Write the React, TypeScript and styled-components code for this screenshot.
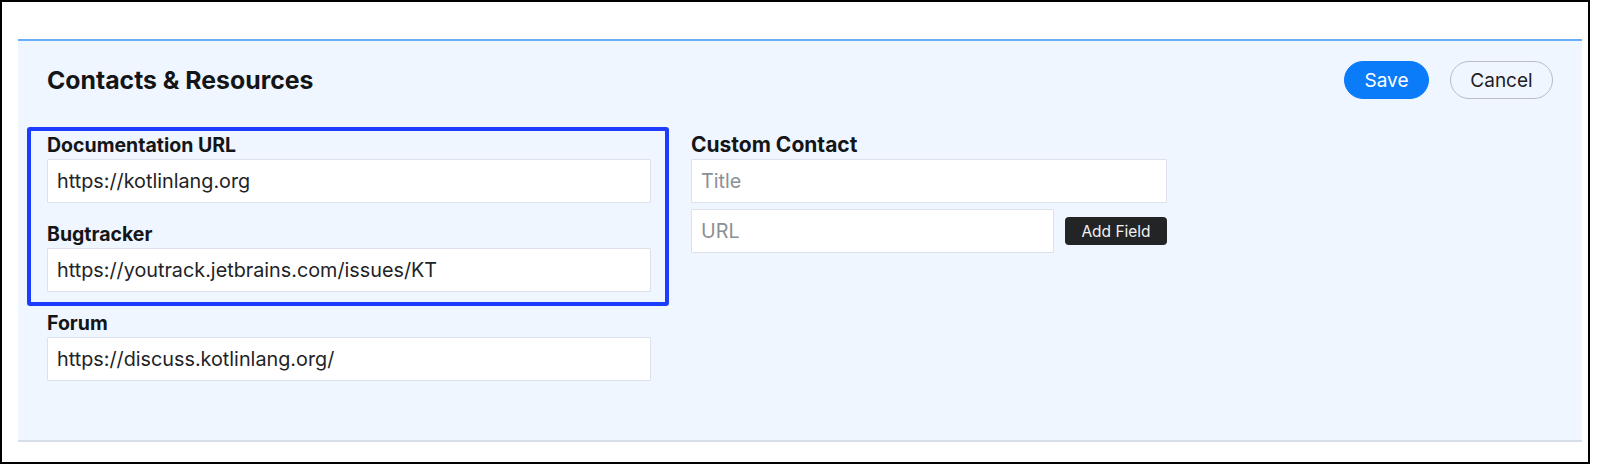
import React from "react";
import styled, { createGlobalStyle } from "styled-components";

const GlobalStyle = createGlobalStyle`
  html, body {
    margin: 0;
    padding: 0;
    background: #ffffff;
  }
  body {
    font-family: Inter, "Noto Sans", "Liberation Sans", sans-serif;
    color: #1c1d1f;
  }
  * {
    box-sizing: border-box;
  }
`;

interface Field {
  label: string;
  value: string;
}

const highlighted: Field[] = [
  { label: "Documentation URL", value: "https://kotlinlang.org" },
  { label: "Bugtracker", value: "https://youtrack.jetbrains.com/issues/KT" },
];

const others: Field[] = [
  { label: "Forum", value: "https://discuss.kotlinlang.org/" },
];

const App: React.FC = () => {
  return (
    <>
      <GlobalStyle />
      <Frame>
        <Panel>
          <Header>
            <Title>Contacts &amp; Resources</Title>
            <Actions>
              <PillButton primary>Save</PillButton>
              <PillButton>Cancel</PillButton>
            </Actions>
          </Header>
          <Columns>
            <Column>
              <Highlight>
                {highlighted.map((f) => (
                  <FieldBlock key={f.label}>
                    <Label>{f.label}</Label>
                    <TextInput defaultValue={f.value} />
                  </FieldBlock>
                ))}
              </Highlight>
              {others.map((f) => (
                <FieldBlock key={f.label}>
                  <Label>{f.label}</Label>
                  <TextInput defaultValue={f.value} />
                </FieldBlock>
              ))}
            </Column>
            <CustomColumn>
              <Label large>Custom Contact</Label>
              <TextInput placeholder="Title" />
              <UrlRow>
                <TextInput placeholder="URL" />
                <AddButton>Add Field</AddButton>
              </UrlRow>
            </CustomColumn>
          </Columns>
        </Panel>
      </Frame>
    </>
  );
};

const Frame = styled.div`
  width: 1590px;
  height: 464px;
  border: 2px solid #000;
  padding: 37px 0 0 16px;
  overflow: hidden;
`;

const Panel = styled.section`
  width: 1564px;
  height: 403px;
  background: #eff6ff;
  border-top: 2px solid #6aaef7;
  border-bottom: 2px solid #d8dee7;
  padding: 20px 29px 0 29px;
`;

const Header = styled.div`
  display: flex;
  align-items: center;
  justify-content: space-between;
  height: 38px;
`;

const Title = styled.h2`
  margin: 0;
  font-size: 24.8px;
  font-weight: 700;
  color: #141517;
`;

const Actions = styled.div`
  display: flex;
  gap: 21px;
`;

const PillButton = styled.button<{ primary?: boolean }>`
  height: 38px;
  width: ${(p) => (p.primary ? "85px" : "103px")};
  padding: 0;
  border-radius: 19px;
  border: 1px solid ${(p) => (p.primary ? "#0a7cf9" : "#b8bdc5")};
  background: ${(p) => (p.primary ? "#0a7cf9" : "transparent")};
  color: ${(p) => (p.primary ? "#ffffff" : "#1f2023")};
  font-family: inherit;
  font-size: 19px;
  font-weight: 400;
  cursor: pointer;
`;

const Columns = styled.div`
  display: flex;
  gap: 40px;
  margin-top: 34px;
`;

const Column = styled.div`
  width: 604px;
  display: flex;
  flex-direction: column;
  gap: 19px;
`;

const Highlight = styled.div`
  position: relative;
  display: flex;
  flex-direction: column;
  gap: 19px;

  &::before {
    content: "";
    position: absolute;
    left: -20px;
    right: -18px;
    top: -6px;
    bottom: -14px;
    border: 4px solid #1c3dff;
    border-radius: 3px;
    pointer-events: none;
  }
`;

const FieldBlock = styled.div`
  display: flex;
  flex-direction: column;
  gap: 2px;
`;

const Label = styled.label<{ large?: boolean }>`
  font-size: ${(p) => (p.large ? "21px" : "19.5px")};
  line-height: 24px;
  font-weight: 700;
  color: #141517;
`;

const TextInput = styled.input`
  width: 100%;
  height: 44px;
  border: 1px solid #dde2ea;
  border-radius: 1px;
  background: #ffffff;
  padding: 0 9px;
  font-family: inherit;
  font-size: 19.8px;
  color: #222326;
  outline: none;

  &::placeholder {
    color: #8b8f96;
  }
`;

const CustomColumn = styled.div`
  width: 476px;
  display: flex;
  flex-direction: column;
  gap: 2px;

  & > input + div {
    margin-top: 4px;
  }
`;

const UrlRow = styled.div`
  display: flex;
  align-items: center;
  gap: 11px;

  & > input {
    width: 363px;
    flex: none;
  }
`;

const AddButton = styled.button`
  width: 102px;
  height: 28px;
  border: none;
  border-radius: 4px;
  background: #222426;
  color: #f1f1f1;
  font-family: inherit;
  font-size: 15.5px;
  cursor: pointer;
`;

export default App;
